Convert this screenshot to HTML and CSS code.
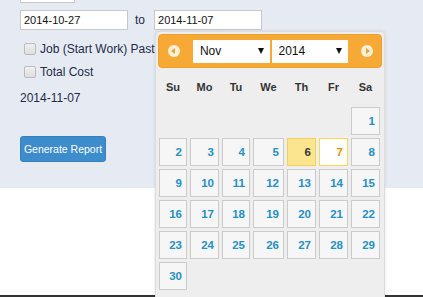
FILE: index.html
```html
<!DOCTYPE html>
<html lang="en">
<head>
  <meta charset="UTF-8">
  <meta name="viewport" content="width=device-width, initial-scale=1.0">
  <title>Report</title>
  <link rel="stylesheet" href="styles.css">
</head>
<body>
  <div class="filters">
    <div class="top-row">
      <input type="text" class="field field-short" value="">
    </div>

    <div class="range-row">
      <input type="text" class="field" value="2014-10-27">
      <span class="to">to</span>
      <input type="text" class="field" value="2014-11-07">
    </div>

    <label class="check-row first">
      <input type="checkbox" class="check">
      Job (Start Work) Past
    </label>
    <label class="check-row">
      <input type="checkbox" class="check">
      Total Cost
    </label>

    <div class="date-text">2014-11-07</div>

    <button type="button" class="generate">Generate Report</button>
  </div>

  <div class="content"></div>
  <div class="footer"></div>

  <!-- datepicker popup, opened under the second field -->
  <div class="datepicker">
    <div class="dp-header">
      <span class="dp-nav prev"></span>
      <div class="dp-select month">Nov<span class="caret"></span></div>
      <div class="dp-select year">2014<span class="caret"></span></div>
      <span class="dp-nav next"></span>
    </div>

    <div class="dp-grid dp-names">
      <span>Su</span>
      <span>Mo</span>
      <span>Tu</span>
      <span>We</span>
      <span>Th</span>
      <span>Fr</span>
      <span>Sa</span>
    </div>

    <div class="dp-grid dp-days" id="days"></div>
  </div>

  <script>
    // November 2014 starts on a Saturday
    const days = document.getElementById("days")
    const firstWeekday = 6
    for (let i = 0; i < firstWeekday; i++) {
      const blank = document.createElement("span")
      days.appendChild(blank)
    }
    for (let d = 1; d <= 30; d++) {
      const cell = document.createElement("a")
      cell.className = "day"
      if (d === 6) cell.className += " today"
      if (d === 7) cell.className += " active"
      cell.textContent = d
      days.appendChild(cell)
    }
  </script>
</body>
</html>
```

FILE: styles.css
```css
body {
  margin: 0;
  font-family: "Liberation Sans", Arial, sans-serif;
  color: #222a4a;
  height: 297px;
  overflow: hidden;
  position: relative;
}
.filters {
  background-color: #e6ebf3;
  height: 188px;
  padding-left: 20px;
  box-sizing: border-box;
}
.top-row {
  height: 3px;
  display: flex;
  align-items: flex-end;
}
.field {
  width: 108px;
  height: 20px;
  box-sizing: border-box;
  border: 1px solid #c9c9c9;
  background: #fff;
  font-family: "Liberation Sans", Arial, sans-serif;
  font-size: 11px;
  color: #111;
  padding: 0 3px;
  margin: 0;
  outline: none;
}
.field-short {
  width: 55px;
}
.range-row {
  display: flex;
  align-items: center;
  margin-top: 7px;
}
.to {
  font-size: 12px;
  margin: 0 9px 0 7px;
}
.check-row {
  display: flex;
  align-items: center;
  font-size: 12px;
  height: 12px;
  margin-top: 11px;
}
.check-row.first {
  margin-top: 13px;
}
.check {
  appearance: none;
  width: 12px;
  height: 12px;
  margin: 0 4px 0 4px;
  border: 1px solid #bcbcbc;
  border-radius: 2px;
  background: linear-gradient(#f0f0f0, #dedede);
  box-sizing: border-box;
}
.date-text {
  font-size: 12px;
  margin-top: 13px;
  height: 14px;
}
.generate {
  display: block;
  margin-top: 31px;
  width: 86px;
  height: 26px;
  border: 1px solid #3581c0;
  border-radius: 3px;
  background-color: #3d8ccb;
  color: #fff;
  font-family: "Liberation Sans", Arial, sans-serif;
  font-size: 10.5px;
  padding: 0;
}
.content {
  height: 107px;
  background: #fff;
}
.footer {
  height: 10px;
  background: #333;
}

/* datepicker */
.datepicker {
  position: absolute;
  left: 155px;
  top: 31px;
  width: 230px;
  height: 280px;
  box-sizing: border-box;
  border: 1px solid #dcdcdc;
  border-radius: 4px;
  background: #eee;
  padding: 2px;
  box-shadow: 0 0 3px rgba(0, 0, 0, 0.12);
}
.dp-header {
  display: flex;
  align-items: center;
  height: 34px;
  box-sizing: border-box;
  padding: 0 8px 0 9px;
  background: #f6aa35;
  border: 1px solid #f0a02a;
  border-radius: 4px;
}
.dp-nav {
  width: 12px;
  height: 12px;
  border-radius: 50%;
  background: #fdf0d9;
  position: relative;
}
.dp-nav::after {
  content: "";
  position: absolute;
  top: 3px;
  border-top: 3px solid transparent;
  border-bottom: 3px solid transparent;
}
.dp-nav.prev::after {
  left: 3px;
  border-right: 4px solid #f0a030;
}
.dp-nav.next::after {
  left: 5px;
  border-left: 4px solid #f0a030;
}
.dp-select {
  position: relative;
  width: 77px;
  height: 23px;
  line-height: 23px;
  background: #fff;
  color: #111;
  font-size: 12px;
  padding-left: 7px;
  box-sizing: border-box;
}
.month {
  margin-left: 13px;
}
.year {
  margin-left: 2px;
  margin-right: 13px;
}
.caret {
  position: absolute;
  right: 6px;
  top: 8px;
  border-left: 3.5px solid transparent;
  border-right: 3.5px solid transparent;
  border-top: 6px solid #111;
}
.dp-grid {
  display: grid;
  grid-template-columns: 28px 29px 28px 31px 29px 29px 29px;
  column-gap: 3px;
  margin-left: 1px;
}
.dp-names {
  height: 38px;
  align-items: center;
  text-align: center;
  font-size: 11px;
  font-weight: bold;
  color: #333;
}
.dp-days {
  row-gap: 3px;
  grid-auto-rows: 28px;
  margin-top: 1px;
}
.day {
  display: block;
  box-sizing: border-box;
  border: 1px solid #cbcbcb;
  background: #f6f6f6;
  color: #2590c4;
  font-size: 11.5px;
  font-weight: bold;
  line-height: 26px;
  text-align: right;
  padding-right: 4px;
}
.day.today {
  background: #fbe58e;
  border-color: #f3cf5b;
  color: #363636;
}
.day.active {
  background: #fff;
  border-color: #fbd850;
  color: #eb8f00;
}
```
